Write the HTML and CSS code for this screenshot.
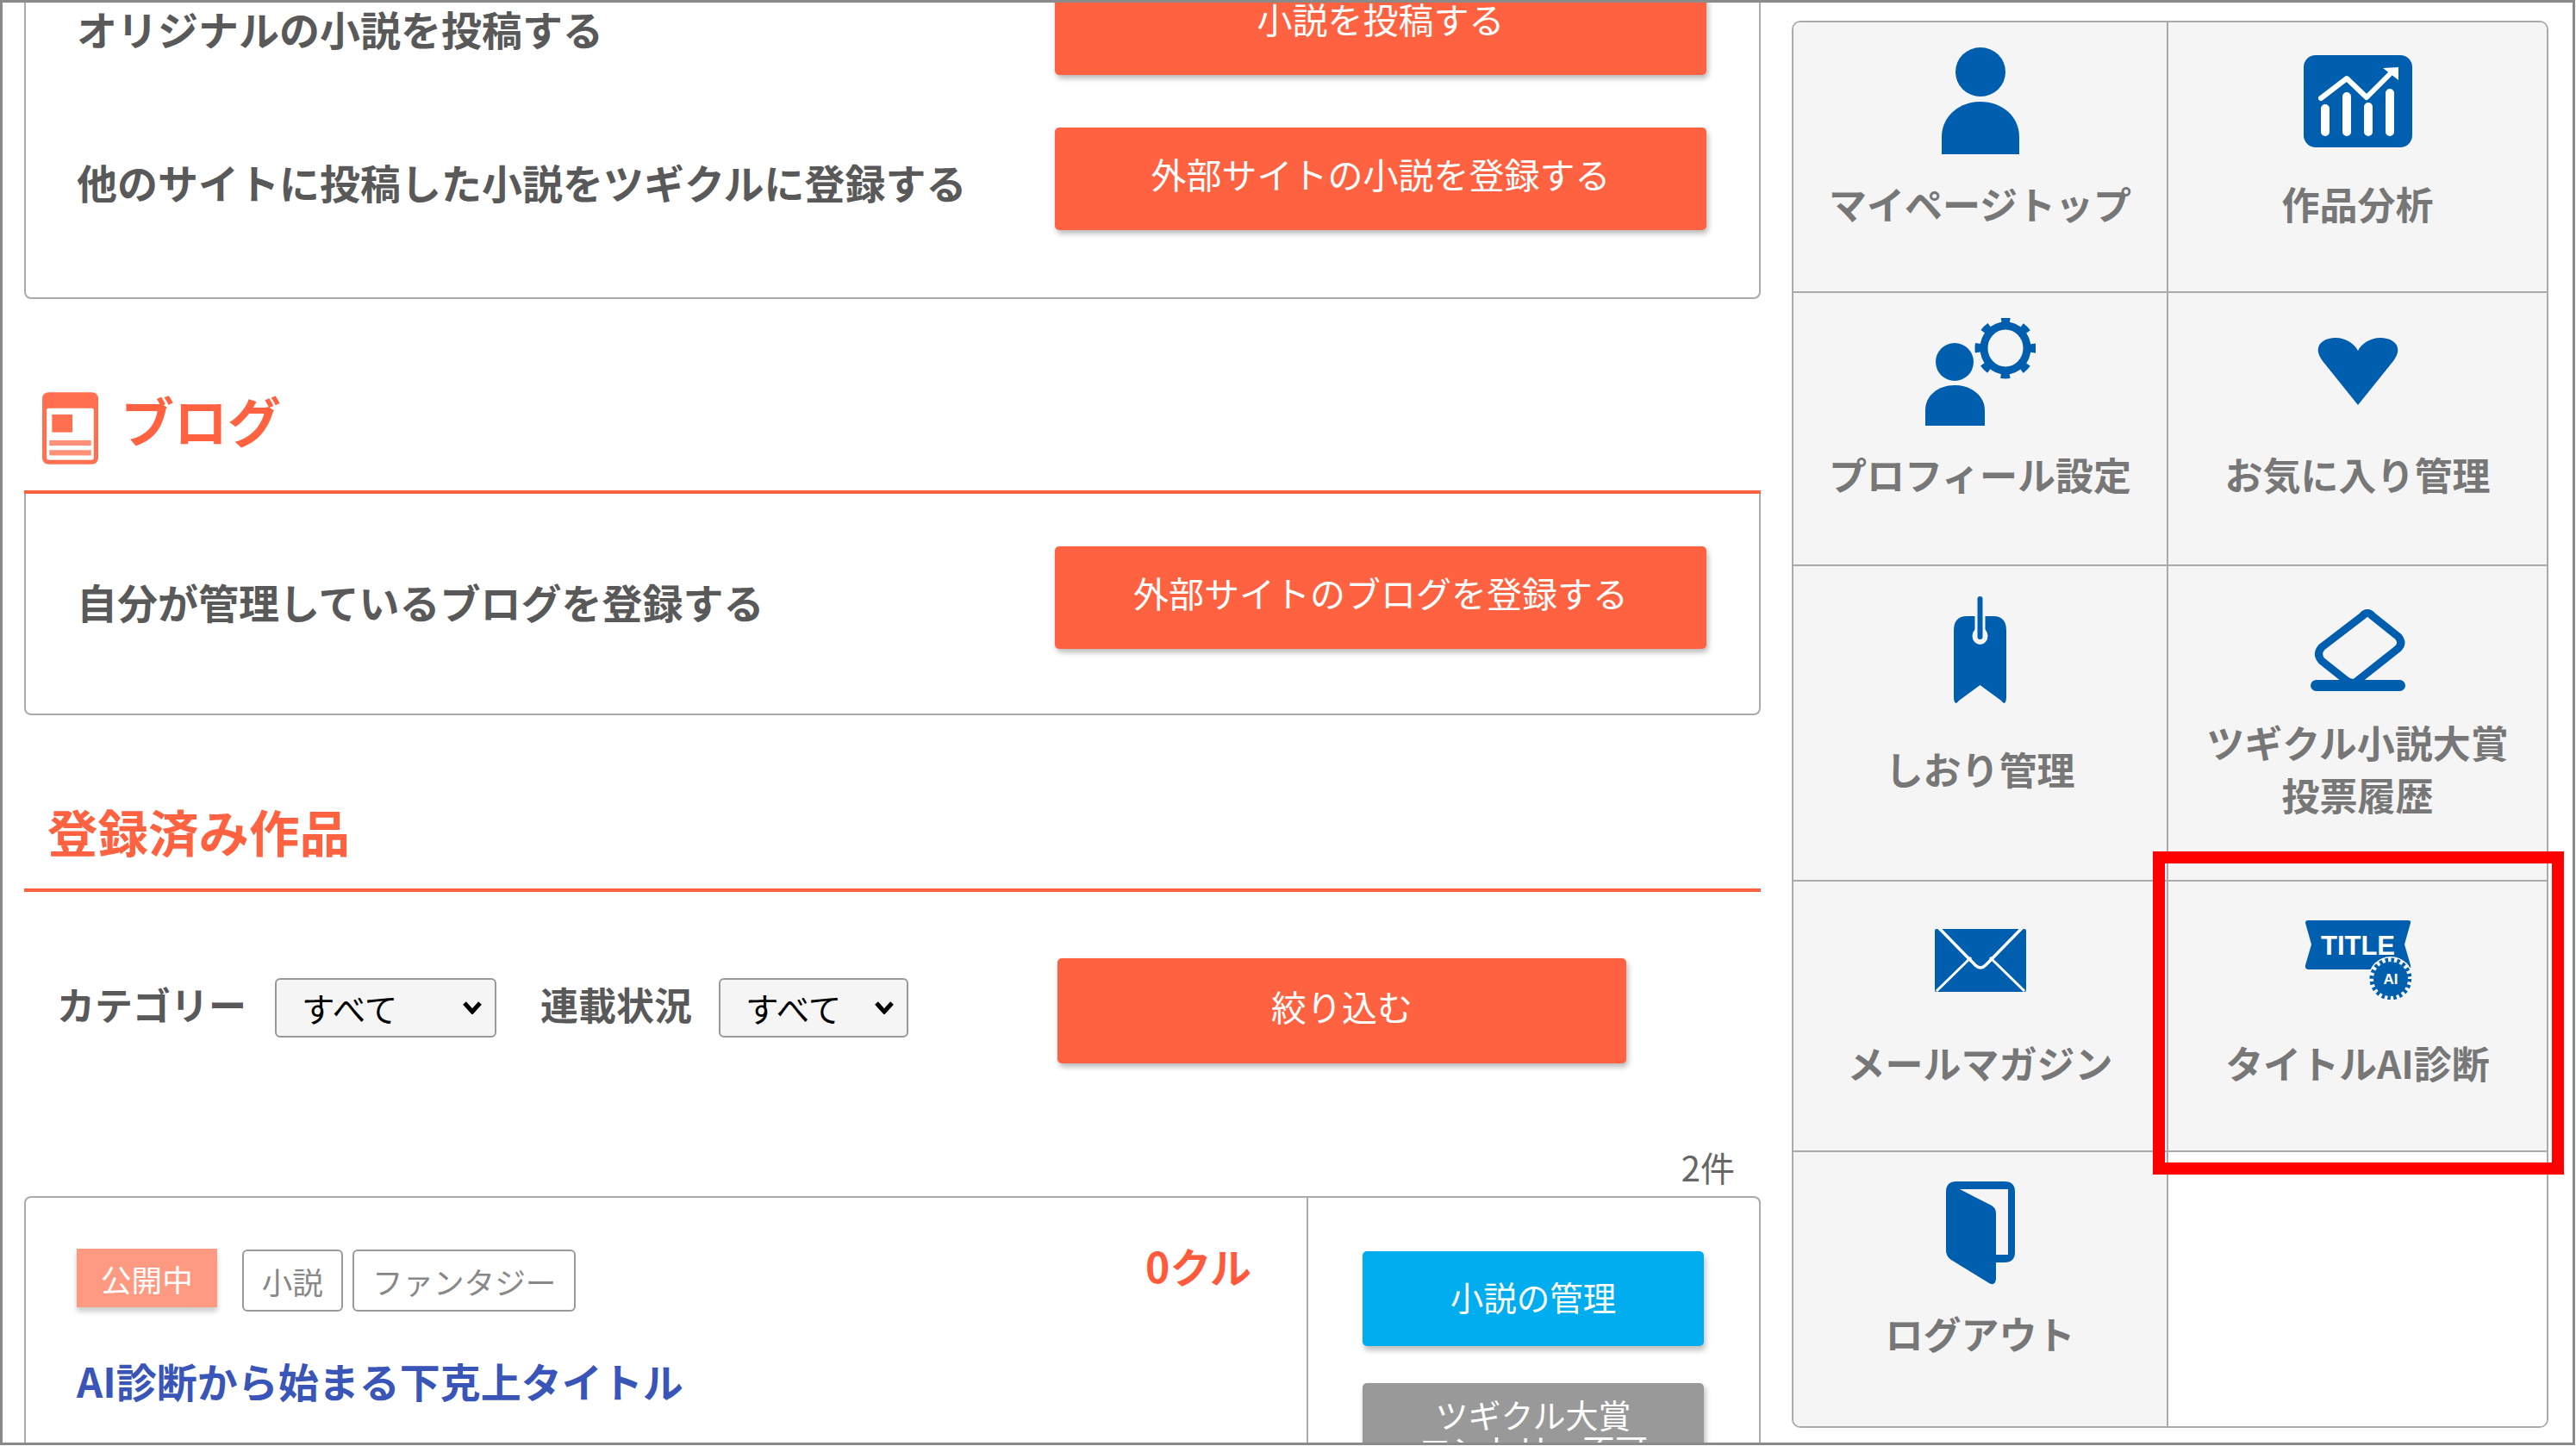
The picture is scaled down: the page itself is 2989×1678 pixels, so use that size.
FILE: index.html
```html
<!DOCTYPE html>
<html lang="ja">
<head>
<meta charset="utf-8">
<title>マイページ</title>
<link rel="stylesheet" href="styles.css">
</head>
<body>
<div class="frame">
  <main class="main">
    <section class="card card-post">
      <div class="row">
        <p class="row-text">オリジナルの小説を投稿する</p>
        <a class="btn btn-row">小説を投稿する</a>
      </div>
      <div class="row">
        <p class="row-text">他のサイトに投稿した小説をツギクルに登録する</p>
        <a class="btn btn-row">外部サイトの小説を登録する</a>
      </div>
    </section>

    <h2 class="heading heading-blog">
      <svg class="blog-icon" viewBox="0 0 63 81" width="65" height="84"><rect width="63" height="81" rx="7" fill="#ff6f50"/><rect x="5" y="18" width="53" height="58" rx="2" fill="#fff"/><rect x="11" y="25" width="23" height="20" fill="#ff6f50"/><rect x="8" y="54" width="47" height="6" fill="#ff8f77"/><rect x="8" y="65" width="47" height="6" fill="#ff8f77"/></svg>
      <span>ブログ</span>
    </h2>
    <section class="card card-blog">
      <div class="row">
        <p class="row-text">自分が管理しているブログを登録する</p>
        <a class="btn btn-row">外部サイトのブログを登録する</a>
      </div>
    </section>

    <h2 class="heading heading-works"><span>登録済み作品</span></h2>
    <form class="filter">
      <label class="filter-label">カテゴリー</label>
      <select class="select select-cat"><option>すべて</option></select>
      <label class="filter-label filter-label-2">連載状況</label>
      <select class="select select-state"><option>すべて</option></select>
      <a class="btn btn-filter">絞り込む</a>
    </form>
    <p class="count">2件</p>

    <section class="card work">
      <div class="work-body">
        <div class="work-top">
          <span class="tag tag-public">公開中</span>
          <span class="tag">小説</span>
          <span class="tag">ファンタジー</span>
          <span class="kuru">0クル</span>
        </div>
        <a class="work-title">AI診断から始まる下克上タイトル</a>
      </div>
      <div class="work-side">
        <a class="btn btn-blue">小説の管理</a>
        <a class="btn btn-grey">ツギクル大賞<br>エントリー不可</a>
      </div>
    </section>
  </main>

  <nav class="menu">
    <a class="cell">
      <span class="icon"><svg width="90" height="124" viewBox="0 0 90 124"><ellipse cx="45" cy="28.5" rx="29" ry="28.5"/><path d="M0 124V104C0 80 20 63 45 63S90 80 90 104V124Z"/></svg></span>
      <span class="label">マイページトップ</span>
    </a>
    <a class="cell">
      <span class="icon"><svg width="126" height="107" viewBox="0 0 126 107"><rect width="126" height="107" rx="14"/><g stroke="#fff" stroke-width="10" stroke-linecap="round"><path d="M25 62V89M50 48V89M75 60V89M100 44V89"/></g><path d="M20 50L50 27L73 49L104 18" fill="none" stroke="#fff" stroke-width="6" stroke-linecap="round" stroke-linejoin="round"/><path d="M92 15L110 14V29Z" fill="#fff"/></svg></span>
      <span class="label">作品分析</span>
    </a>
    <a class="cell">
      <span class="icon"><svg width="128" height="125" viewBox="0 0 128 125"><ellipse cx="34" cy="51" rx="22" ry="22"/><path d="M0 125V107C0 90 15 78 34 78S69 90 69 107V125Z"/><ellipse cx="93" cy="35" rx="25" ry="26" fill="none" stroke="#005eae" stroke-width="9"/><circle cx="93" cy="35" r="31" fill="none" stroke="#005eae" stroke-width="9" stroke-dasharray="10 14.35" stroke-dashoffset="5" transform="rotate(-90 93 35)"/></svg></span>
      <span class="label">プロフィール設定</span>
    </a>
    <a class="cell">
      <span class="icon"><svg width="94" height="78" viewBox="0 0 94 78"><path d="M47 78L6 27C-7 10 6 0 21 0C33 0 43 7 47 15C51 7 61 0 73 0C88 0 101 10 88 27Z"/></svg></span>
      <span class="label">お気に入り管理</span>
    </a>
    <a class="cell cell-tall">
      <span class="icon"><svg width="61" height="125" viewBox="0 0 61 125"><path d="M0 40Q0 23 15 23H46Q61 23 61 40V118Q60 128 55 121L30.5 103L6 121Q1 128 0 118Z"/><ellipse cx="30.5" cy="46" rx="9" ry="10" fill="#f5f5f5"/><rect x="24.500" y="23" width="12" height="22" fill="#f5f5f5"/><rect x="27.500" y="0" width="6" height="50" rx="3"/></svg></span>
      <span class="label">しおり管理</span>
    </a>
    <a class="cell cell-tall">
      <span class="icon"><svg width="110" height="95" viewBox="0 0 110 95"><path d="M60 8Q66 1 72 8L102 32Q108 40 101 46L53 84Q48 87 42 83L13 60Q6 52 13 44Z" fill="none" stroke="#005eae" stroke-width="9" stroke-linejoin="round"/><rect x="0" y="82" width="110" height="13" rx="6.500"/></svg></span>
      <span class="label">ツギクル小説大賞<br>投票履歴</span>
    </a>
    <a class="cell">
      <span class="icon"><svg width="106" height="73" viewBox="0 0 106 73"><rect width="106" height="73" rx="2"/><path d="M0 2L47 50Q53 56 59 50L106 2" fill="none" stroke="#fff" stroke-width="3.500" transform="translate(0 -8)"/><path d="M2 72L42 33M104 72L64 33" fill="none" stroke="#fff" stroke-width="3"/></svg></span>
      <span class="label">メールマガジン</span>
    </a>
    <a class="cell">
      <span class="icon"><svg width="124" height="92" viewBox="0 0 124 92"><path d="M1 3Q1 0 4 0H120Q124 0 123 3L116 28L123 52Q124 57 119 57H5Q0 57 1 52L8 28Z"/><text class="svg-title" x="19" y="40" textLength="86" lengthAdjust="spacingAndGlyphs">TITLE</text><circle cx="100" cy="68" r="26" fill="#f5f5f5"/><circle cx="100" cy="68" r="20"/><circle cx="100" cy="68" r="22" fill="none" stroke="#005eae" stroke-width="5" stroke-dasharray="3.500 3.400"/><text class="svg-ai" x="100" y="74" text-anchor="middle">AI</text></svg></span>
      <span class="label">タイトルAI診断</span>
    </a>
    <a class="cell">
      <span class="icon icon-door"><svg width="80" height="120" viewBox="0 0 80 120"><path fill-rule="evenodd" d="M0 12Q0 0 12 0H68Q80 0 80 12V82Q80 94 68 94H58V113Q57 122 50 118L6 91Q0 87 0 80ZM16 9L53 28Q58 31 58 37V85H72V9Z"/></svg></span>
      <span class="label">ログアウト</span>
    </a>
    <div class="cell cell-empty"></div>
  </nav>

  <div class="highlight"></div>
</div>
</body>
</html>
```

FILE: styles.css
```css
* { box-sizing: border-box; }
html, body { margin: 0; padding: 0; background: #fff; }
body { font-family: "Noto Sans CJK JP", "Noto Sans", sans-serif; }
p, h2 { margin: 0; }

.frame {
  position: relative;
  width: 2988px;
  height: 1677px;
  border: 3px solid #8a8a8a;
  overflow: hidden;
  display: flex;
  align-items: flex-start;
  background: #fff;
}

.main { width: 2015px; margin-left: 25px; margin-top: -96px; flex: none; }

.card { border: 2px solid #aaa; border-radius: 8px; background: #fff; }
.card-post { padding: 59px 61px 78px 59px; display: flex; flex-direction: column; gap: 61px; }
.card-blog { padding: 61px 61px 75px 59px; border-top: 0; border-radius: 0 0 8px 8px; }

.row { display: flex; align-items: center; justify-content: space-between; }
.row-text { font-size: 47px; font-weight: 700; color: #595959; line-height: 60px; position: relative; top: 3px; }
.row:first-child .row-text { top: 4px; }
.card-post .row:first-child .row-text { top: 5px; }

.btn {
  display: flex;
  align-items: center;
  justify-content: center;
  color: #fff;
  text-align: center;
  border-radius: 5px;
  box-shadow: 2px 4px 6px rgba(0, 0, 0, .28);
}
.btn-row { width: 756px; height: 119px; background: #ff6240; font-size: 41px; padding-bottom: 13px; }

.heading { color: #ff6240; font-weight: 700; display: flex; align-items: center; border-bottom: 4px solid #ff6240; }
.heading-blog { margin-top: 108px; height: 118px; font-size: 62px; padding-left: 21px; gap: 26px; align-items: flex-start; }
.heading-blog span { line-height: 80px; margin-top: -8px; }
.blog-icon { flex: none; }
.heading-works { margin-top: 87px; height: 118px; font-size: 58.500px; padding: 0 0 22px 27px; }

.filter { display: flex; align-items: center; margin-top: 77px; padding-left: 38px; height: 122px; }
.filter-label { font-size: 44px; font-weight: 700; color: #595959; margin-right: 33px; position: relative; top: -8px; }
.filter-label-2 { margin-left: 51px; margin-right: 31px; }
.select {
  appearance: none;
  height: 69px;
  font-family: "Noto Sans CJK JP", sans-serif;
  font-size: 38.500px;
  color: #000;
  background: #f5f5f5 url("data:image/svg+xml,%3Csvg xmlns='http://www.w3.org/2000/svg' width='24' height='16'%3E%3Cpath d='M3 3L12 13L21 3' fill='none' stroke='%23000' stroke-width='5'/%3E%3C/svg%3E") no-repeat right 14px center;
  border: 2px solid #999;
  border-radius: 6px;
  padding: 0 0 0 29px;
  position: relative;
  top: -4px;
}
.select-cat { width: 257px; }
.select-state { width: 220px; }
.btn-filter { width: 660px; height: 122px; background: #ff6240; font-size: 41px; margin-left: 173px; padding-bottom: 12px; }

.count { margin-top: 90px; height: 64px; text-align: right; padding-right: 30px; font-size: 40px; color: #666; line-height: 60px; }

.work { display: flex; height: 400px; border-bottom: 0; border-radius: 8px 8px 0 0; }
.work-body { width: 1488px; flex: none; padding: 57px 64px 0 59px; border-right: 2px solid #aaa; }
.work-top { display: flex; align-items: flex-start; gap: 11px; }
.tag {
  height: 72px;
  margin-top: 3px;
  padding: 0 21px;
  display: flex;
  align-items: center;
  font-size: 35.600px;
  color: #888;
  border: 2px solid #999;
  border-radius: 6px;
}
.tag-public { height: 68px; margin: 2px 18px 0 0; padding: 0 28px; color: #fff; background: #ff9a82; border: 0; border-radius: 0; box-shadow: 0 5px 6px rgba(0, 0, 0, .2); }
.kuru { margin: -9px 0 0 auto; font-size: 48px; font-weight: 700; color: #ff5a3c; line-height: 60px; }
.work-title { display: block; margin-top: 50px; font-size: 47px; font-weight: 700; color: #3a55b8; line-height: 60px; }

.work-side { flex: 1; padding: 62px 0 0 63px; display: flex; flex-direction: column; gap: 43px; }
.btn-blue { width: 396px; height: 110px; background: #00aeef; font-size: 38.500px; padding-bottom: 6px; box-shadow: 2px 5px 6px rgba(0, 0, 0, .25); }
.btn-grey { width: 396px; height: 120px; background: #999; font-size: 38px; line-height: 40px; align-items: flex-start; padding-top: 16px; }

.menu {
  flex: none;
  margin: 21px 0 0 36px;
  width: 878px;
  display: grid;
  grid-template-columns: 435px 441px;
  grid-template-rows: 314px 317px 366px 314px 318px;
  border: 2px solid #aaa;
  border-radius: 10px;
  overflow: hidden;
}
.cell {
  background: #f5f5f5;
  display: flex;
  flex-direction: column;
  align-items: center;
  padding-top: 28px;
  border-right: 2px solid #aaa;
  border-bottom: 2px solid #aaa;
}
.cell:nth-child(even) { border-right: 0; padding-right: 2px; }
.cell:nth-last-child(-n+2) { border-bottom: 0; }
.cell-empty { background: #fff; }
.icon { height: 126px; display: flex; align-items: center; justify-content: center; }
.icon svg { fill: #005eae; display: block; }
.icon-door svg { margin-top: 6px; }
.label { margin-top: 26px; font-size: 44px; font-weight: 700; color: #777; line-height: 61px; text-align: center; }
.cell-tall { padding-top: 34px; }
.cell-tall .label { margin-top: 14px; height: 122px; display: flex; align-items: center; justify-content: center; }

.svg-title { font-family: "Liberation Sans", sans-serif; font-size: 31px; font-weight: 700; fill: #fff; }
.svg-ai { font-family: "Liberation Sans", sans-serif; font-size: 17px; font-weight: 700; fill: #fff; }

.highlight {
  position: absolute;
  left: 2495px;
  top: 985px;
  width: 477px;
  height: 375px;
  border: 14px solid #f00;
  pointer-events: none;
}
```
